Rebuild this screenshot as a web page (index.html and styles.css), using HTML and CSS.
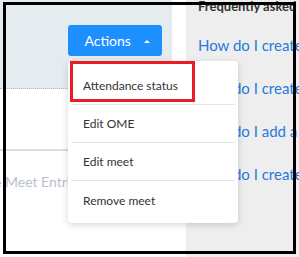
FILE: index.html
```html
<!DOCTYPE html>
<html>

<head>
<link rel="stylesheet" href="styles.css">
</head>

<body>
  <div class="page">
    <div class="main">
      <div class="toolbar">
        <button class="actionsbutton">Actions <span class="caret"></span></button>
      </div>
      <div class="row"></div>
      <div class="row empty">e Meet Entries</div>
    </div>
    <div class="gutter"></div>
    <div class="faq">
      <h4 class="faqtitle">Frequently asked questions</h4>
      <a href="#q1">How do I create a meet?</a>
      <a href="#q2">How do I create an entry?</a>
      <a href="#q3">How do I add a swimmer?</a>
      <a href="#q4">How do I create a team?</a>
    </div>
  </div>

  <!-- Actions dropdown -->
  <div class="dropdown">
    <div class="highlight"></div>
    <a href="#attendance" class="menuitem">Attendance status</a>
    <a href="#ome" class="menuitem">Edit OME</a>
    <a href="#edit" class="menuitem">Edit meet</a>
    <a href="#remove" class="menuitem">Remove meet</a>
  </div>

  <div class="frame"></div>
</body>
</html>
```

FILE: styles.css
```css
/* page fills the small window, no scrollbars */
* {
  box-sizing: border-box;
}

body {
  margin: 0;
  width: 299px;
  height: 257px;
  overflow: hidden;
  position: relative;
  font-family: Lato, "Open Sans", sans-serif;
  background: white;
}

.page {
  display: flex;
  height: 257px;
}

/* left side with the toolbar */
.main {
  width: 172px;
  flex-shrink: 0;
}

.toolbar {
  height: 89px;
  background-color: rgb(229, 236, 239);
  border-bottom: 1px dotted rgb(185, 185, 185);
  padding: 25px 0 0 68px;
}

.actionsbutton {
  width: 94px;
  height: 31px;
  border: none;
  border-radius: 3px;
  background-color: rgb(30, 143, 255);
  color: white;
  font-family: inherit;
  font-size: 14px;
  padding: 0 0 0 4px;
  text-align: center;
}

.caret {
  display: inline-block;
  width: 0;
  height: 0;
  margin-left: 9px;
  vertical-align: 3px;
  border-left: 3px solid transparent;
  border-right: 3px solid transparent;
  border-bottom: 3px solid white;
}

.row {
  height: 62px;
  border-bottom: 2px solid rgb(221, 221, 221);
}

.row.empty {
  height: auto;
  border: none;
  padding-top: 22px;
  margin-left: -6px;
  font-size: 14px;
  color: rgb(183, 193, 203);
  white-space: nowrap;
}

.gutter {
  width: 14px;
  flex-shrink: 0;
}

/* frequently asked questions column */
.faq {
  flex: 1;
  background-color: rgb(238, 238, 238);
  padding: 0 0 0 12px;
  display: flex;
  flex-direction: column;
  white-space: nowrap;
  overflow: hidden;
}

.faqtitle {
  margin: -2px 0 22px;
  font-size: 13px;
  color: rgb(51, 51, 51);
}

.faq a {
  display: block;
  height: 43px;
  font-size: 15px;
  color: rgb(38, 121, 222);
  text-decoration: none;
}

/* the open dropdown */
.dropdown {
  position: absolute;
  left: 68px;
  top: 61px;
  width: 170px;
  height: 162px;
  padding: 6px 3px 3px;
  background: white;
  border-radius: 4px;
  box-shadow: 0 2px 7px rgba(0, 0, 0, 0.16);
}

.menuitem {
  display: flex;
  align-items: center;
  height: 38px;
  padding-left: 12px;
  border-bottom: 1px solid rgb(229, 229, 229);
  font-size: 12px;
  color: rgb(51, 51, 51);
  text-decoration: none;
}

.menuitem:last-child {
  border-bottom: none;
}

/* red box drawn round the first item */
.highlight {
  position: absolute;
  left: 2px;
  top: 0;
  width: 125px;
  height: 41px;
  border: 3px solid rgb(232, 28, 36);
}

/* black frame round the screenshot */
.frame {
  position: absolute;
  left: 3px;
  top: 2px;
  width: 293px;
  height: 252px;
  border: 3px solid black;
}
```
